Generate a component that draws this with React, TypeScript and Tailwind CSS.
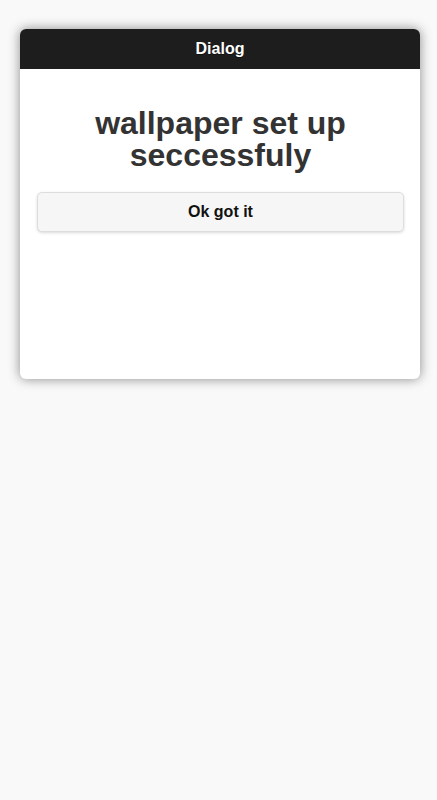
export default function App() {
  return (
    <div className="min-h-[800px] w-full bg-[#f9f9f9] pt-[29px] font-['Liberation_Sans',Arial,sans-serif]">
      <div className="ml-5 w-[400px] h-[350px] rounded-[6px] bg-white shadow-[0_0_12px_rgba(0,0,0,0.45)] overflow-hidden">
        <div className="h-10 flex items-center justify-center bg-[#1d1d1d] text-white font-bold text-base [text-shadow:0_1px_0_#111]">
          Dialog
        </div>
        <div className="pl-[17px] pr-4 pt-[38px]">
          <h1 className="text-center text-[32px] leading-[32px] font-bold text-[#333]">
            wallpaper set up seccessfuly
          </h1>
          <button className="mt-[21px] w-full h-10 rounded-[5px] border border-[#ddd] bg-[#f6f6f6] text-[#111] font-bold text-base shadow-[0_1px_3px_rgba(0,0,0,0.15)]">
            Ok got it
          </button>
        </div>
      </div>
    </div>
  );
}
